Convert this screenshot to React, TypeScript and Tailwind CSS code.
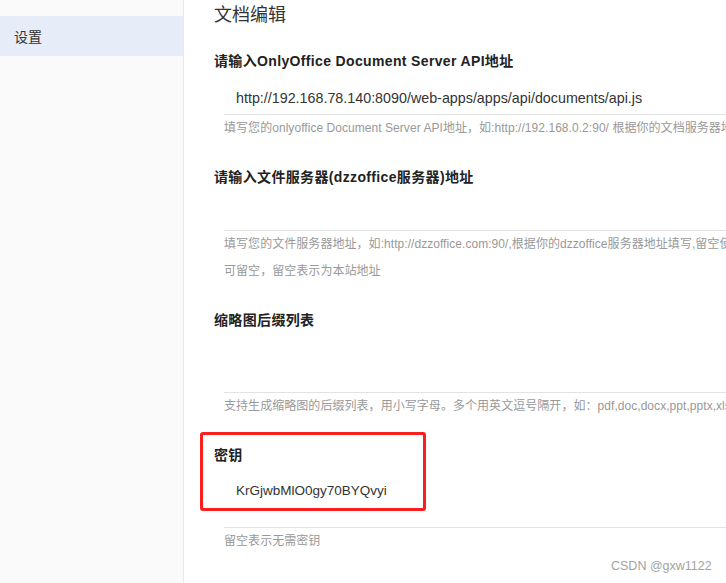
const cjk = 'font-["Liberation_Sans","Noto_Sans_CJK_SC",sans-serif]'

interface Field {
  label: string
  value?: string
  valueSize?: string
  tall?: boolean
  help: string[]
}

const fields: Field[] = [
  {
    label: '请输入OnlyOffice Document Server API地址',
    value: 'http://192.168.78.140:8090/web-apps/apps/api/documents/api.js',
    valueSize: 'text-[14.3px]',
    help: ['填写您的onlyoffice Document Server API地址，如:http://192.168.0.2:90/ 根据你的文档服务器地址填写'],
  },
  {
    label: '请输入文件服务器(dzzoffice服务器)地址',
    help: [
      '填写您的文件服务器地址，如:http://dzzoffice.com:90/,根据你的dzzoffice服务器地址填写,留空使用本站地址',
      '可留空，留空表示为本站地址',
    ],
  },
  {
    label: '缩略图后缀列表',
    tall: true,
    help: ['支持生成缩略图的后缀列表，用小写字母。多个用英文逗号隔开，如：pdf,doc,docx,ppt,pptx,xls,xlsx'],
  },
  {
    label: '密钥',
    value: 'KrGjwbMlO0gy70BYQvyi',
    valueSize: 'text-[13.5px]',
    tall: true,
    help: ['留空表示无需密钥'],
  },
]

function FieldRow({ field }: { field: Field }) {
  return (
    <div className="mt-[23px] [&+&]:mt-[29px]">
      <div className="h-5 text-[14px] leading-5 font-bold tracking-[0.35px] text-[#222] whitespace-nowrap">
        {field.label}
      </div>
      <div className="ml-[10px]">
        <div
          className={`${field.tall ? 'h-[63px] pt-4' : 'h-[44px] pt-[17px]'} ${field.valueSize ?? 'text-[14px]'} border-b border-[#e2e2e2] pl-3 leading-5 text-[#333] whitespace-nowrap`}
        >
          {field.value}
        </div>
        <div className="mt-[3px] text-[12px] tracking-[0.05px] text-[#999]">
          {field.help.map((line, i) => (
            <div key={i} className={`h-5 leading-5 whitespace-nowrap ${i > 0 ? 'mt-[7px]' : ''}`}>
              {line}
            </div>
          ))}
        </div>
      </div>
    </div>
  )
}

export default function App() {
  return (
    <div className={`relative flex h-[583px] w-[726px] overflow-hidden bg-white ${cjk}`}>
      <aside className="w-[184px] shrink-0 border-r border-[#e9e9e9] bg-[#fafafa] pt-4">
        <div className="h-10 bg-[#e6edf8] pl-[14px] text-[14px] leading-[42px] text-[#333]">设置</div>
      </aside>
      <main className="min-w-0 flex-1 pl-[30px] pt-[2px]">
        <h2 className="h-[26px] text-[18px] leading-[26px] text-[#333]">文档编辑</h2>
        {fields.map((f) => (
          <FieldRow key={f.label} field={f} />
        ))}
      </main>
      <div className="pointer-events-none absolute left-[200px] top-[432px] h-[79px] w-[226px] rounded-[3px] border-[3px] border-[#fa1e1e]" />
      <div className="absolute left-[611px] top-[557px] text-[12.5px] leading-[18px] text-[#a3a3a3] font-['Liberation_Sans',sans-serif]">
        CSDN @gxw1122
      </div>
    </div>
  )
}
